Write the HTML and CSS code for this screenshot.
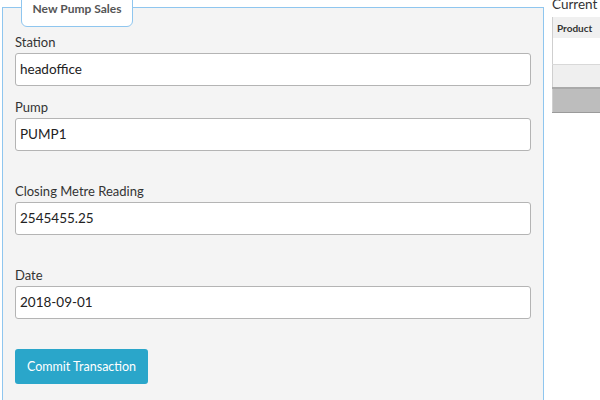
FILE: index.html
```html
<!DOCTYPE html>
<html>
<head>
<meta charset="utf-8">
<link rel="stylesheet" href="styles.css">
</head>
<body>
<div class="page">
  <div class="panel">
    <div class="tab">New Pump Sales</div>
    <div class="group group-first">
      <label class="label">Station</label>
      <div class="input">headoffice</div>
    </div>
    <div class="group">
      <label class="label">Pump</label>
      <div class="input">PUMP1</div>
    </div>
    <div class="group">
      <label class="label">Closing Metre Reading</label>
      <div class="input">2545455.25</div>
    </div>
    <div class="group">
      <label class="label">Date</label>
      <div class="input">2018-09-01</div>
    </div>
    <button class="btn">Commit Transaction</button>
  </div>
  <div class="side">
    <div class="caption">Current Prices</div>
    <table class="prices">
      <thead><tr><th>Product</th><th>Price</th></tr></thead>
      <tbody>
        <tr class="row-a"><td></td><td></td></tr>
        <tr class="row-b"><td></td><td></td></tr>
        <tr class="row-c"><td></td><td></td></tr>
      </tbody>
    </table>
  </div>
</div>
</body>
</html>
```
FILE: styles.css
```css
html, body {
  margin: 0;
  padding: 0;
  background: #ffffff;
  width: 600px;
  height: 400px;
  overflow: hidden;
}
body {
  font-family: Lato, "Open Sans", sans-serif;
  color: #222;
}
.page {
  display: flex;
  align-items: flex-start;
  width: 900px;
}
.panel {
  position: relative;
  flex: none;
  box-sizing: border-box;
  width: 542px;
  height: 430px;
  margin: 7px 0 0 2px;
  padding: 24px 12px 0 12px;
  background: #f4f4f4;
  border: 1px solid #8fc6ef;
}
.tab {
  position: absolute;
  left: 18px;
  top: -9px;
  box-sizing: border-box;
  width: 112px;
  height: 28px;
  padding-top: 1px;
  background: #fff;
  border: 1px solid #8fc6ef;
  border-radius: 0 0 6px 6px;
  text-align: center;
  font-weight: bold;
  font-size: 12px;
  line-height: 16px;
  color: #555;
}
.group {
  display: flex;
  flex-direction: column;
  gap: 2px;
  margin-bottom: 30px;
}
.group-first {
  margin-bottom: 11px;
}
.label {
  font-size: 13px;
  line-height: 18px;
  padding-top: 1px;
  color: #333;
}
.input {
  box-sizing: border-box;
  height: 33px;
  background: #fff;
  border: 1px solid #b4b4b4;
  border-radius: 3px;
  padding: 0 4px;
  font-size: 13.5px;
  line-height: 31px;
  color: #222;
}
.btn {
  display: block;
  box-sizing: border-box;
  width: 133px;
  height: 35px;
  margin-top: 1px;
  background: #2aa6ca;
  color: #fff;
  border: none;
  border-radius: 3px;
  font-family: inherit;
  font-size: 12.5px;
  padding: 0;
}
.side {
  margin-left: 8px;
  width: 220px;
  flex: none;
}
.caption {
  font-size: 13.5px;
  line-height: 18px;
  margin-top: -5px;
  margin-bottom: 4px;
  color: #333;
}
.prices {
  border-collapse: collapse;
  width: 220px;
  border-left: 1px solid #cfcfcf;
}
.prices th {
  background: #f0f0f0;
  font-size: 10px;
  font-weight: bold;
  text-align: left;
  height: 21px;
  padding: 0 4px;
  color: #333;
}
.prices td {
  padding: 0;
}
.row-a td {
  height: 26px;
  background: #fff;
  border-bottom: 1px solid #d8d8d8;
}
.row-b td {
  height: 22px;
  background: #efefef;
  border-bottom: 2px solid #a9a9a9;
}
.row-c td {
  height: 23px;
  background: #bdbdbd;
  border-bottom: 1px solid #9a9a9a;
}
```
